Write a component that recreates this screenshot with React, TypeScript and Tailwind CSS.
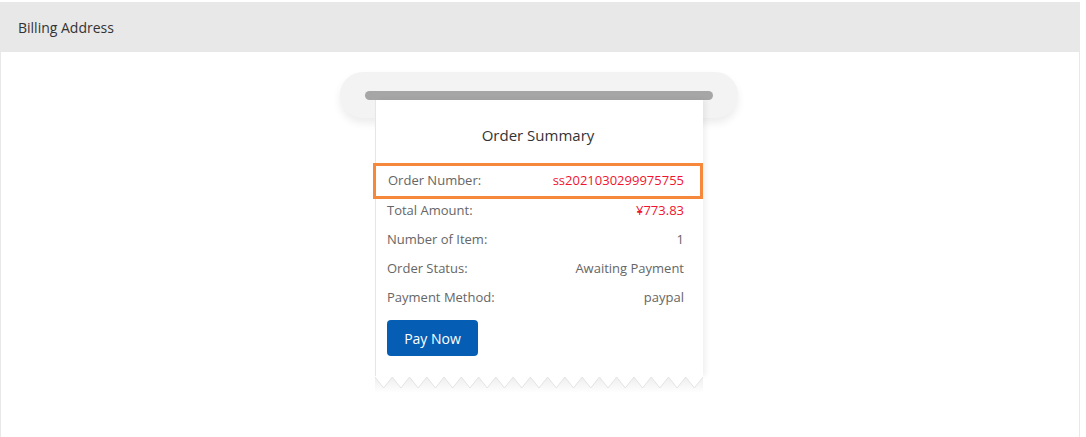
import React from "react";

const rows = [
	{ label: "Total Amount:", value: "¥773.83", red: true },
	{ label: "Number of Item:", value: "1" },
	{ label: "Order Status:", value: "Awaiting Payment" },
	{ label: "Payment Method:", value: "paypal" },
];

function ZigZag() {
	const w = 328;
	const teeth = 19;
	const step = w / teeth;
	let top = `M0 0 L0 1`;
	for (let i = 0; i < teeth; i++) {
		const x = i * step;
		top += ` L${(x + step / 2).toFixed(2)} 12 L${(x + step).toFixed(2)} 1`;
	}
	const line = top.replace("M0 0 L0 1", "M0 1");
	return (
		<svg width={w} height={17} viewBox={`0 0 ${w} 17`} className="block">
			<defs>
				<linearGradient id="zzShade" x1="0" y1="0" x2="0" y2="1">
					<stop offset="0" stopColor="#ededed" />
					<stop offset="1" stopColor="#ffffff" />
				</linearGradient>
			</defs>
			<rect x="0" y="0" width={w} height="17" fill="url(#zzShade)" />
			<path d={`${top} L${w} 0 Z`} fill="#ffffff" />
			<path d={line} fill="none" stroke="#e4e4e4" strokeWidth="1" />
		</svg>
	);
}

export default function App() {
	return (
		<div className="bg-white pt-[2px]" style={{ fontFamily: '"Open Sans", "Noto Sans", sans-serif' }}>
			<div className="w-[1080px] h-[435px] border-x border-[#e8e8e8]">
				<div className="h-[50px] bg-[#e8e8e8] flex items-center px-[17px] text-[14px] text-[#333]">
					Billing Address
				</div>

				<div className="flex flex-col items-center pt-[20px] pr-[2px]">
					<div className="w-[398px] h-[46px] rounded-full bg-[#f3f3f3] shadow-[0_5px_8px_rgba(0,0,0,0.08)] pt-[19px] pl-[25px]">
						<div className="w-[348px] h-[9px] rounded-full bg-[#a6a6a6]" />
					</div>

					<div className="relative -mt-[18px] w-[328px] flex flex-col">
						<div className="bg-white border-l border-[#e6e6e6] shadow-[3px_0_5px_rgba(0,0,0,0.06)] pt-[24px] pb-[20px]">
							<div className="text-center text-[15px] text-[#333] leading-[22px] pr-[3px]">Order Summary</div>

							<div className="mt-[17px] -ml-[3px] w-[330px] h-[36px] border-[3px] border-[#f5883a] flex items-center justify-between pl-[12px] pr-[16px] text-[13px]">
								<span className="text-[#666]">Order Number:</span>
								<span className="text-[#f0142f]">ss2021030299975755</span>
							</div>

							<div className="-mt-[3px] pl-[11px] pr-[19px]">
								{rows.map((r) => (
									<div key={r.label} className="h-[29px] flex items-center justify-between text-[13px]">
										<span className="text-[#666]">{r.label}</span>
										<span className={r.red ? "text-[#f0142f]" : "text-[#666]"}>{r.value}</span>
									</div>
								))}
								<button className="mt-[8px] w-[91px] h-[36px] rounded-[4px] bg-[#065eb4] text-white text-[14px]">
									Pay Now
								</button>
							</div>
						</div>
						<ZigZag />
					</div>
				</div>
			</div>
		</div>
	);
}
